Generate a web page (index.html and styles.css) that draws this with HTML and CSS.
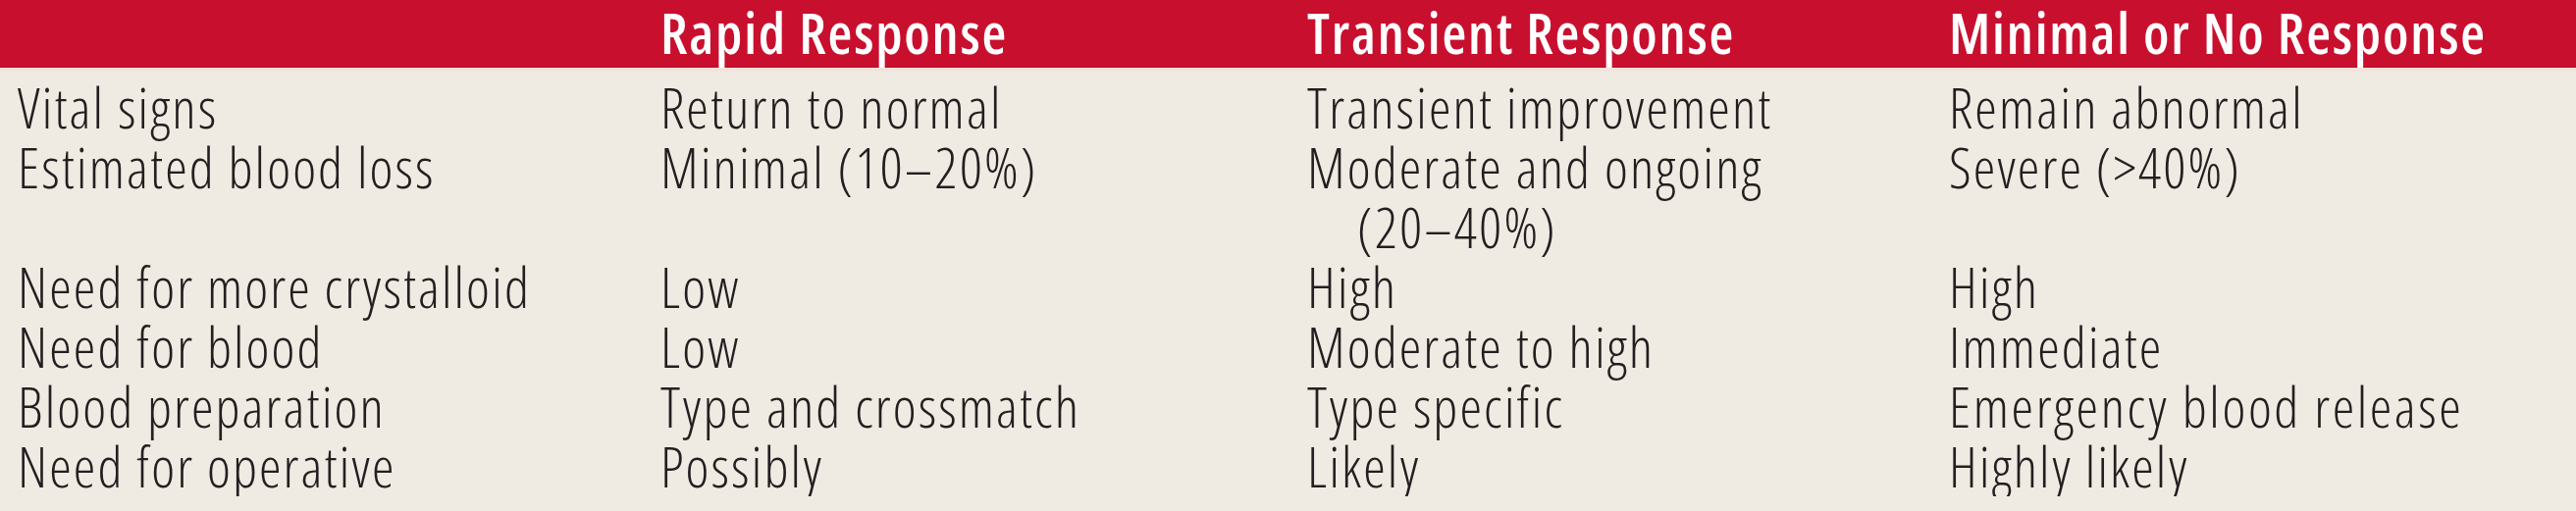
FILE: index.html
```html
<!DOCTYPE html>
<html lang="en">
<head>
<meta charset="utf-8">
<title>Response to initial fluid resuscitation</title>
<link rel="stylesheet" href="styles.css">
</head>
<body>
<table class="resp-table">
  <thead>
    <tr class="head-row">
      <th class="c1"></th>
      <th class="c2">Rapid Response</th>
      <th class="c3">Transient Response</th>
      <th class="c4">Minimal or No Response</th>
    </tr>
  </thead>
  <tbody>
    <tr class="first-row">
      <td>Vital signs</td>
      <td>Return to normal</td>
      <td>Transient improvement</td>
      <td>Remain abnormal</td>
    </tr>
    <tr>
      <td>Estimated blood loss</td>
      <td>Minimal (10–20%)</td>
      <td class="hang">Moderate and ongoing<br>(20–40%)</td>
      <td>Severe (&gt;40%)</td>
    </tr>
    <tr>
      <td>Need for more crystalloid</td>
      <td>Low</td>
      <td>High</td>
      <td>High</td>
    </tr>
    <tr>
      <td>Need for blood</td>
      <td>Low</td>
      <td>Moderate to high</td>
      <td>Immediate</td>
    </tr>
    <tr>
      <td>Blood preparation</td>
      <td>Type and crossmatch</td>
      <td>Type specific</td>
      <td class="wide">Emergency blood release</td>
    </tr>
    <tr>
      <td>Need for operative</td>
      <td>Possibly</td>
      <td>Likely</td>
      <td>Highly likely</td>
    </tr>
  </tbody>
</table>
</body>
</html>
```
FILE: styles.css
```css
html, body {
  margin: 0;
  padding: 0;
  background: #efebe3;
}
body {
  font-family: "Open Sans", "Noto Sans", sans-serif;
  color: #231f20;
}
.resp-table {
  border-collapse: collapse;
  table-layout: fixed;
  width: 2625px;
}
.resp-table th,
.resp-table td {
  padding: 0;
  text-align: left;
  vertical-align: top;
  white-space: nowrap;
}
.c1 { width: 673px; }
.c2 { width: 659px; }
.c3 { width: 654px; }
.c4 { width: auto; }
.head-row th {
  background: #c8102e;
  color: #ffffff;
  font-size: 57px;
  font-weight: 600;
  font-stretch: 75%;
  letter-spacing: 1.8px;
  height: 66px;
  line-height: 66px;
  padding-bottom: 3px;
  border-bottom: 4px solid #f5e2dc;
  box-shadow: inset 0 -1px 0 #ad0f2b;
}
.resp-table td {
  font-size: 57px;
  font-weight: 300;
  font-stretch: 75%;
  letter-spacing: 2.1px;
  line-height: 61px;
}
.resp-table td:first-child {
  padding-left: 18px;
}
.first-row td {
  padding-top: 6px;
}
.resp-table td.hang {
  text-indent: -51px;
  padding-left: 51px;
}
.resp-table td.wide {
  letter-spacing: 2.6px;
}
```
